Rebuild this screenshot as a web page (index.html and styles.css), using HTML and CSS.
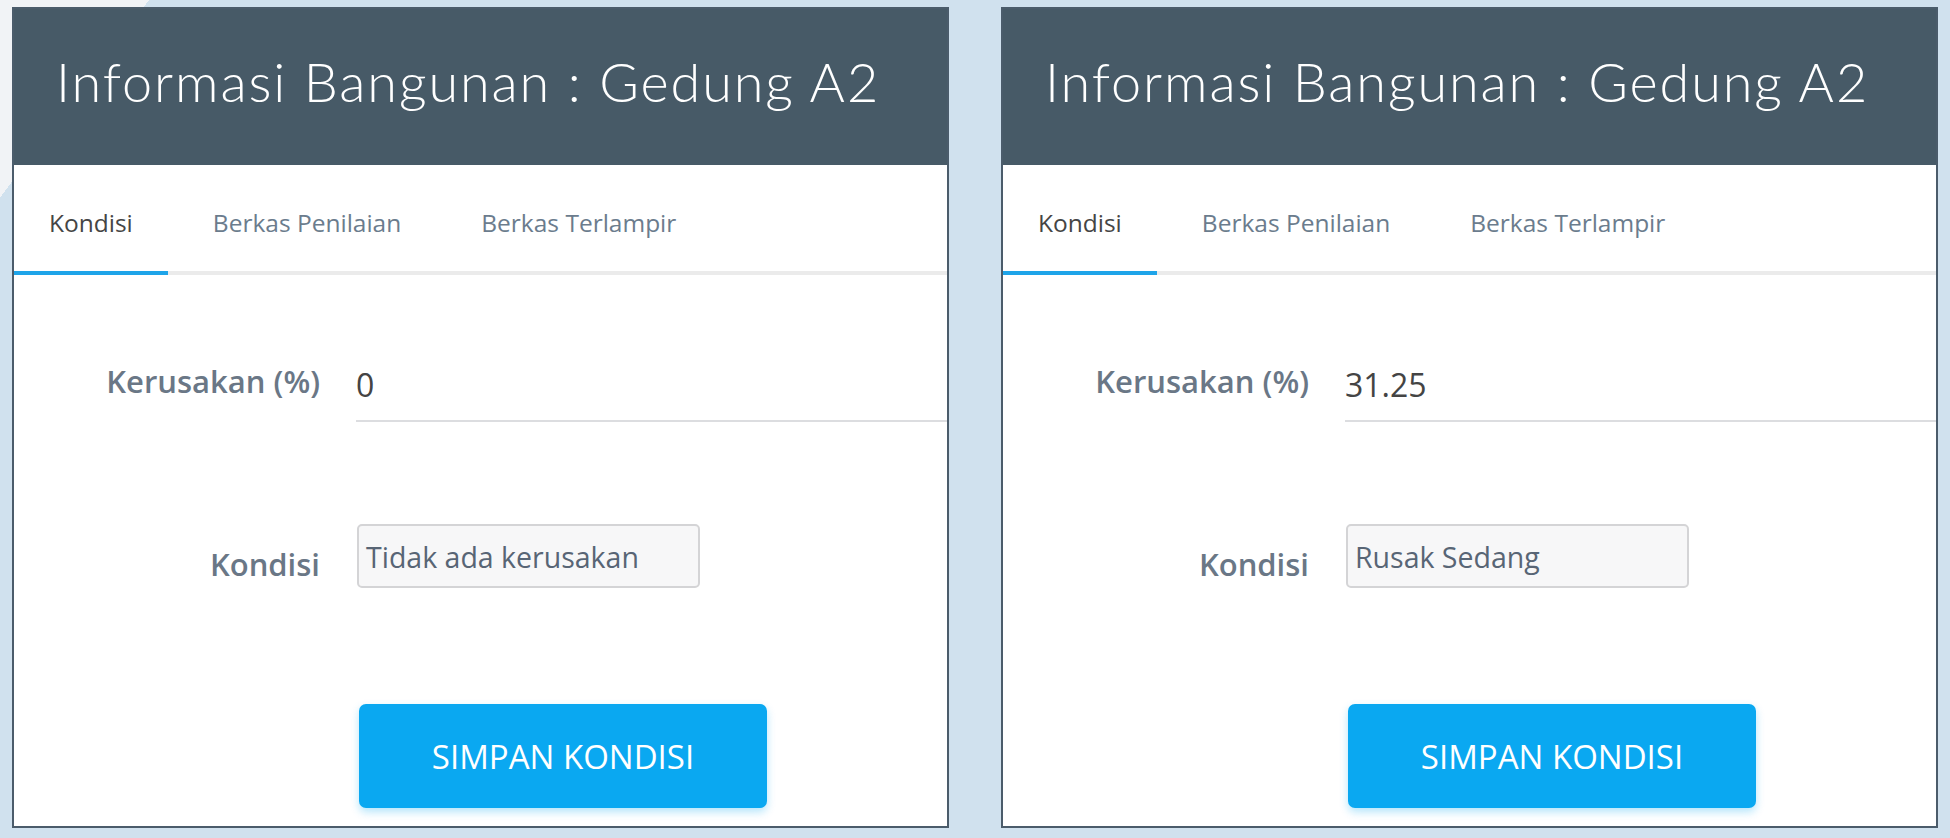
FILE: index.html
```html
<!DOCTYPE html>
<html lang="id">

<head>
    <meta charset="UTF-8">
    <meta name="viewport" content="width=device-width, initial-scale=1.0">
    <title>Informasi Bangunan</title>
    <link rel="stylesheet" href="styles.css">
</head>

<body>
    <div class="wrap">
        <!-- panel kiri -->
        <section class="panel">
            <h2 class="panel-head">Informasi Bangunan : Gedung A2</h2>
            <ul class="tabs">
                <li class="on">Kondisi</li>
                <li>Berkas Penilaian</li>
                <li>Berkas Terlampir</li>
            </ul>
            <form class="form">
                <label class="label" for="rusak-1">Kerusakan (%)</label>
                <input class="input-line" id="rusak-1" type="text" value="0" readonly>

                <label class="label label-box" for="kondisi-1">Kondisi</label>
                <div class="field-box" id="kondisi-1">Tidak ada kerusakan</div>

                <button type="button" class="btn-save">SIMPAN KONDISI</button>
            </form>
        </section>

        <!-- panel kanan -->
        <section class="panel">
            <h2 class="panel-head">Informasi Bangunan : Gedung A2</h2>
            <ul class="tabs">
                <li class="on">Kondisi</li>
                <li>Berkas Penilaian</li>
                <li>Berkas Terlampir</li>
            </ul>
            <form class="form">
                <label class="label" for="rusak-2">Kerusakan (%)</label>
                <input class="input-line" id="rusak-2" type="text" value="31.25" readonly>

                <label class="label label-box" for="kondisi-2">Kondisi</label>
                <div class="field-box" id="kondisi-2">Rusak Sedang</div>

                <button type="button" class="btn-save">SIMPAN KONDISI</button>
            </form>
        </section>
    </div>
</body>

</html>
```

FILE: styles.css
```css
body {
    margin: 0;
    height: 838px;
    overflow: hidden;
    font-family: "Open Sans", "Noto Sans", sans-serif;
    background: linear-gradient(127deg, #f1f3f6 119px, #d0e1ee 119px);
}

ul,
li {
    list-style: none;
    margin: 0;
    padding: 0;
}

.wrap {
    display: flex;
    gap: 52px;
    padding: 7px 0 0 12px;
}

/* 카드 */
.panel {
    box-sizing: border-box;
    width: 937px;
    height: 821px;
    border: 2px solid #4b5c6b;
    background: #fff;
    overflow: hidden;
}

.panel-head {
    box-sizing: border-box;
    height: 156px;
    margin: 0;
    padding: 0 0 12px 42px;
    display: flex;
    align-items: center;
    background: #475a67;
    color: #fff;
    font-family: Lato, "Open Sans", sans-serif;
    font-size: 54px;
    font-weight: 300;
    letter-spacing: 1.9px;
}

/* 탭 */
.tabs {
    display: flex;
    gap: 10px;
    height: 106px;
    border-bottom: 4px solid #ebebeb;
}

.tabs li {
    display: flex;
    align-items: center;
    padding: 8px 35px 0;
    font-size: 24.5px;
    color: #6b7c8d;
}

.tabs li.on {
    color: #454545;
    border-bottom: 4px solid #1ea4e9;
    margin-bottom: -4px;
}

/* 폼 */
.form {
    display: grid;
    grid-template-columns: 306px 1fr;
    column-gap: 36px;
    align-items: start;
    padding-top: 85px;
}

.label {
    text-align: right;
    font-size: 31px;
    font-weight: 600;
    color: #6a7786;
}

.label-box {
    margin-top: 121px;
}

.input-line {
    box-sizing: content-box;
    height: 44px;
    margin-top: 2px;
    padding: 0 0 14px;
    border: none;
    border-bottom: 2px solid #dcdde0;
    background: transparent;
    font-family: inherit;
    font-size: 32px;
    color: #444;
    outline: none;
}

.field-box {
    box-sizing: border-box;
    width: 343px;
    height: 64px;
    margin: 102px 0 0 1px;
    padding: 12px 7px 0;
    border: 2px solid #d4d4d6;
    border-radius: 5px;
    background: #f7f7f8;
    font-size: 28.5px;
    color: #586575;
}

.btn-save {
    grid-column: 2;
    width: 408px;
    height: 104px;
    margin: 116px 0 0 3px;
    border: none;
    border-radius: 7px;
    background: #0aa8f1;
    box-shadow: 0 4px 8px rgba(10, 168, 241, 0.3);
    color: #fff;
    font-family: inherit;
    font-size: 33px;
    cursor: pointer;
}
```
